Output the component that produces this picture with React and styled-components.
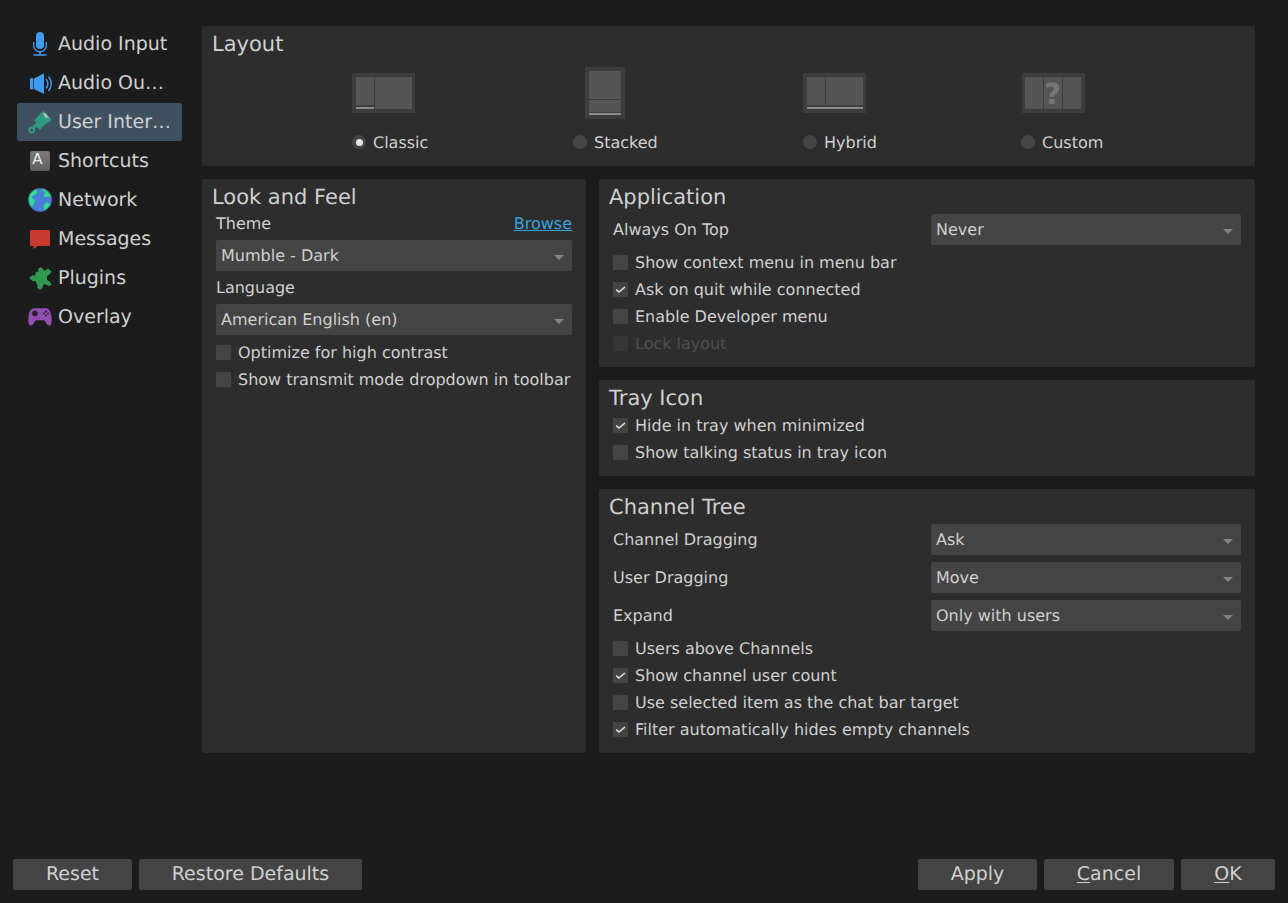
import React from "react";
import styled, { createGlobalStyle } from "styled-components";

const GlobalStyle = createGlobalStyle`
  html, body {
    margin: 0;
    padding: 0;
    background: #1c1c1c;
  }
  body {
    font-family: "DejaVu Sans", "Liberation Sans", sans-serif;
    color: #d0d0d0;
    text-rendering: geometricPrecision;
  }
`;

const Page = styled.div`
  width: 1288px;
  height: 903px;
  display: flex;
  flex-direction: column;
  overflow: hidden;
`;

const Body = styled.div`
  display: flex;
  padding-left: 17px;
  gap: 20px;
`;

const Sidebar = styled.nav`
  width: 165px;
  padding-top: 25px;
  display: flex;
  flex-direction: column;
  gap: 1px;
`;

const NavItem = styled.div`
  height: 38px;
  display: flex;
  align-items: center;
  gap: 6px;
  padding-left: 11px;
  border-radius: 2px;
  font-size: 19px;
  white-space: nowrap;
  background: ${(p) => (p.$active ? "#3f5060" : "transparent")};
`;

const NavIcon = styled.svg`
  width: 24px;
  height: 24px;
  flex: none;
`;

const Main = styled.main`
  width: 1053px;
  padding-top: 26px;
  display: flex;
  flex-direction: column;
  gap: 13px;
`;

const Panel = styled.section`
  background: #2d2d2d;
  border-radius: 2px;
  padding: 0 14px 10px;
`;

const Title = styled.h2`
  margin: 0 0 0 -4px;
  padding-top: 6px;
  height: 24px;
  line-height: 24px;
  font-size: 21px;
  font-weight: 400;
  box-sizing: content-box;
`;

const LayoutPanel = styled(Panel)`
  padding-bottom: 13px;
`;

const LayoutGrid = styled.div`
  margin: 11px 0 0 135px;
  display: grid;
  grid-template-columns: 221px 230px 218px auto;
`;

const LayoutOption = styled.div`
  display: flex;
  flex-direction: column;
  row-gap: 12px;
`;

const PreviewBox = styled.div`
  height: 52px;
  display: flex;
  align-items: center;
  padding-left: ${(p) => p.$indent}px;
`;

const Preview = styled.svg`
  display: block;
`;

const RadioRow = styled.label`
  height: 22px;
  display: flex;
  align-items: center;
  gap: 7px;
  font-size: 16px;
`;

const Radio = styled.span`
  width: 14px;
  height: 14px;
  margin-left: 1px;
  border-radius: 50%;
  background: #444444;
  display: flex;
  align-items: center;
  justify-content: center;
  &::after {
    content: "";
    width: 7px;
    height: 7px;
    border-radius: 50%;
    background: ${(p) => (p.$checked ? "#e6e6e6" : "transparent")};
  }
`;

const Columns = styled.div`
  display: grid;
  grid-template-columns: 384px 656px;
  column-gap: 13px;
`;

const Stack = styled.div`
  display: flex;
  flex-direction: column;
  gap: 13px;
`;

const LabelRow = styled.div`
  height: 22px;
  margin-top: ${(p) => p.$top}px;
  display: flex;
  align-items: center;
  justify-content: space-between;
  font-size: 16px;
`;

const LinkText = styled.a`
  color: #3aa3dc;
  text-decoration: underline;
`;

const ComboBox = styled.div`
  height: 31px;
  margin-top: ${(p) => p.$top || 0}px;
  padding: 0 8px 0 5px;
  background: #444444;
  border-radius: 2px;
  display: flex;
  align-items: center;
  justify-content: space-between;
  font-size: 16px;
  &::after {
    content: "";
    margin-top: 3px;
    border-left: 5px solid transparent;
    border-right: 5px solid transparent;
    border-top: 5px solid #858585;
  }
`;

const FormRow = styled.div`
  margin-top: ${(p) => p.$top}px;
  display: grid;
  grid-template-columns: 318px 310px;
  align-items: center;
  font-size: 16px;
`;

const CheckList = styled.div`
  margin-top: ${(p) => p.$top}px;
  display: flex;
  flex-direction: column;
`;

const CheckRow = styled.label`
  height: 27px;
  display: flex;
  align-items: center;
  gap: 7px;
  font-size: 16px;
  color: ${(p) => (p.$disabled ? "#4e4e4e" : "inherit")};
`;

const Box = styled.span`
  width: 15px;
  height: 15px;
  border-radius: 1px;
  background: ${(p) => (p.$disabled ? "#353535" : "#444444")};
  display: flex;
  align-items: center;
  justify-content: center;
`;

const Footer = styled.footer`
  margin-top: auto;
  padding: 0 13px 13px;
  display: flex;
  gap: 7px;
`;

const Button = styled.button`
  height: 31px;
  width: ${(p) => p.$width}px;
  margin-left: ${(p) => (p.$push ? "auto" : "0")};
  padding: 0 0 1px;
  border: 0;
  border-radius: 2px;
  background: #444444;
  color: #d0d0d0;
  font-family: inherit;
  font-size: 19px;
  text-rendering: geometricPrecision;
  u {
    text-underline-offset: 2px;
  }
`;

function MicIcon() {
  return (
    <NavIcon viewBox="0 0 24 24">
      <rect x="8" y="0" width="8" height="17" rx="4" fill="#3f9cf0" />
      <path d="M5.700 10v3.500a6.300 6.300 0 0 0 12.600 0V10M12 19.800v3M5.500 23h13" fill="none" stroke="#3f9cf0" strokeWidth="1.400" />
    </NavIcon>
  );
}

function SpeakerIcon() {
  return (
    <NavIcon viewBox="0 0 24 24">
      <rect x="2" y="7.300" width="3.300" height="11" fill="#3f9cf0" />
      <path d="M6 7.500l10-5.200v20.700L6 18z" fill="#3f9cf0" />
      <path d="M18 8a7 7 0 0 1 0 9.500M20.500 5.500a11 11 0 0 1 0 14.500" fill="none" stroke="#3f9cf0" strokeWidth="1.400" />
    </NavIcon>
  );
}

function BrushIcon() {
  return (
    <NavIcon viewBox="0 0 24 24">
      <path d="M15.300.7L23.700 10 14.500 16.500 12 20 9 17 7 17 9 12.500 6 10.500z" fill="#2f9a82" />
      <path d="M15.500 3.500l2.500 4.500 1.500-1.500-1.500-2.500zM19.500 6l1.500 2.500" fill="#b9c9c5" stroke="#b9c9c5" strokeWidth=".7" />
      <path d="M5.500 17.500L10 13.500" stroke="#2f9a82" strokeWidth="3" />
      <circle cx="3.700" cy="20" r="2.500" fill="none" stroke="#2f9a82" strokeWidth="2" />
    </NavIcon>
  );
}

function KeyIcon() {
  return (
    <NavIcon viewBox="0 0 24 24">
      <defs>
        <linearGradient id="keyFill" x1="0" y1="0" x2="0" y2="1">
          <stop offset="0" stopColor="#7a7a7a" />
          <stop offset="1" stopColor="#5e5e5e" />
        </linearGradient>
      </defs>
      <rect x="2" y="2" width="20" height="20" rx="2.500" fill="url(#keyFill)" />
      <text x="9.500" y="15" textAnchor="middle" fontSize="15" fill="#f2f2f2" fontFamily="DejaVu Sans">A</text>
    </NavIcon>
  );
}

function GlobeIcon() {
  return (
    <NavIcon viewBox="0 0 24 24">
      <circle cx="12" cy="12" r="11.800" fill="#4a7fd8" />
      <path d="M8 1C5 2 2 4.500 1 8c-1 4 0 8 3 11 1-3 3-4 3-6s-3-2-3-4 4-2 5-4c.5-1-.5-3-1-4zM14 .6c-.5 2 1 3 3 3 1 2-2 3-1 5 2 1 5-1 7.500 1C23 5 19 1 14 .6zM18 15c-2 1-3 4-2 7 3-1 5-3 6-6-1-1-3-2-4-1z" fill="#2fdf8c" />
      <circle cx="12" cy="12" r="11.500" fill="none" stroke="#3b5f9e" strokeWidth=".6" />
    </NavIcon>
  );
}

function MessageIcon() {
  return (
    <NavIcon viewBox="0 0 24 24">
      <path d="M3 3h18a1 1 0 0 1 1 1v14a1 1 0 0 1-1 1H10l-4.500 3v-3H3a1 1 0 0 1-1-1V4a1 1 0 0 1 1-1z" fill="#c8392f" />
    </NavIcon>
  );
}

function PuzzleIcon() {
  return (
    <NavIcon viewBox="0 0 24 24">
      <path d="M1 12l3.500-3 2.500 1 1-4 2.500-.5L10 3l2.500-2L15 3l1 2 4-2.500L23.500 5.500 22 8l-3 2v4l3 2 1.500 3L21 20l-4-2-2 1-.5 3L12 24l-2.500-2v-3l-2-4h-3z" fill="#2f9a4f" />
    </NavIcon>
  );
}

function PadIcon() {
  return (
    <NavIcon viewBox="0 0 24 24">
      <path d="M6 3.300h12c3 0 4.800 3 5.400 8 .5 4 .4 8-1 9-2 1-4-1-6-5H7.600c-2 4-4 6-6 5-1.400-1-1.500-5-1-9C1.200 6.300 3 3.300 6 3.300z" fill="#8f4fb0" />
      <circle cx="7" cy="8.500" r="2.800" fill="#2a1d30" />
      <g fill="#2a1d30">
        <circle cx="18" cy="6.500" r="1" />
        <circle cx="18" cy="10.500" r="1" />
        <circle cx="16" cy="8.500" r="1" />
        <circle cx="20" cy="8.500" r="1" />
      </g>
    </NavIcon>
  );
}

const navItems = [
  { label: "Audio Input", Icon: MicIcon },
  { label: "Audio Ou…", Icon: SpeakerIcon },
  { label: "User Inter…", Icon: BrushIcon, active: true },
  { label: "Shortcuts", Icon: KeyIcon },
  { label: "Network", Icon: GlobeIcon },
  { label: "Messages", Icon: MessageIcon },
  { label: "Plugins", Icon: PuzzleIcon },
  { label: "Overlay", Icon: PadIcon },
];

const FRAME = "#3d3d3d";
const PANE = "#555555";
const BAR = "#8a8a8a";

function ClassicPreview() {
  return (
    <Preview width="63" height="40">
      <rect width="63" height="40" fill={FRAME} />
      <rect x="4" y="4" width="18" height="28" fill={PANE} />
      <rect x="4" y="34" width="18" height="2" fill={BAR} />
      <rect x="23" y="4" width="37" height="32" fill={PANE} />
    </Preview>
  );
}

function StackedPreview() {
  return (
    <Preview width="40" height="52">
      <rect width="40" height="52" fill={FRAME} />
      <rect x="4" y="4" width="32" height="28" fill={PANE} />
      <rect x="4" y="33" width="32" height="12" fill={PANE} />
      <rect x="4" y="46" width="32" height="2" fill={BAR} />
    </Preview>
  );
}

function HybridPreview() {
  return (
    <Preview width="63" height="40">
      <rect width="63" height="40" fill={FRAME} />
      <rect x="4" y="4" width="18" height="28" fill={PANE} />
      <rect x="23" y="4" width="37" height="28" fill={PANE} />
      <rect x="4" y="34" width="56" height="2" fill={BAR} />
    </Preview>
  );
}

function CustomPreview() {
  return (
    <Preview width="63" height="40">
      <rect width="63" height="40" fill={FRAME} />
      <rect x="3" y="4" width="18" height="32" fill={PANE} />
      <rect x="22" y="4" width="18" height="32" fill={PANE} />
      <rect x="41" y="4" width="18" height="32" fill={PANE} />
      <text x="30.600" y="31" textAnchor="middle" fontSize="29" fontWeight="700" fill="#777777" fontFamily="DejaVu Sans">?</text>
    </Preview>
  );
}

const layouts = [
  { label: "Classic", Art: ClassicPreview, indent: 1, checked: true },
  { label: "Stacked", Art: StackedPreview, indent: 13 },
  { label: "Hybrid", Art: HybridPreview, indent: 1 },
  { label: "Custom", Art: CustomPreview, indent: 2 },
];

function Check({ label, checked, disabled }) {
  return (
    <CheckRow $disabled={disabled}>
      <Box $disabled={disabled}>
        {checked && (
          <svg width="11" height="11" viewBox="0 0 11 11">
            <path d="M1.200 5.500L3.800 8 10 3" fill="none" stroke="#e4e4e4" strokeWidth="1.500" />
          </svg>
        )}
      </Box>
      {label}
    </CheckRow>
  );
}

function Field({ label, value, top }) {
  return (
    <FormRow $top={top}>
      <span>{label}</span>
      <ComboBox>{value}</ComboBox>
    </FormRow>
  );
}

export default function App() {
  return (
    <Page>
      <GlobalStyle />
      <Body>
        <Sidebar>
          {navItems.map(({ label, Icon, active }) => (
            <NavItem key={label} $active={active}>
              <Icon />
              {label}
            </NavItem>
          ))}
        </Sidebar>
        <Main>
          <LayoutPanel>
            <Title>Layout</Title>
            <LayoutGrid>
              {layouts.map(({ label, Art, indent, checked }) => (
                <LayoutOption key={label}>
                  <PreviewBox $indent={indent}>
                    <Art />
                  </PreviewBox>
                  <RadioRow>
                    <Radio $checked={checked} />
                    {label}
                  </RadioRow>
                </LayoutOption>
              ))}
            </LayoutGrid>
          </LayoutPanel>
          <Columns>
            <Panel>
              <Title>Look and Feel</Title>
              <LabelRow $top={3}>
                <span>Theme</span>
                <LinkText>Browse</LinkText>
              </LabelRow>
              <ComboBox $top={6}>Mumble - Dark</ComboBox>
              <LabelRow $top={5}>
                <span>Language</span>
              </LabelRow>
              <ComboBox $top={6}>American English (en)</ComboBox>
              <CheckList $top={4}>
                <Check label="Optimize for high contrast" />
                <Check label="Show transmit mode dropdown in toolbar" />
              </CheckList>
            </Panel>
            <Stack>
              <Panel>
                <Title>Application</Title>
                <Field label="Always On Top" value="Never" top={5} />
                <CheckList $top={4}>
                  <Check label="Show context menu in menu bar" />
                  <Check label="Ask on quit while connected" checked />
                  <Check label="Enable Developer menu" />
                  <Check label="Lock layout" disabled />
                </CheckList>
              </Panel>
              <Panel>
                <Title>Tray Icon</Title>
                <CheckList $top={2}>
                  <Check label="Hide in tray when minimized" checked />
                  <Check label="Show talking status in tray icon" />
                </CheckList>
              </Panel>
              <Panel>
                <Title>Channel Tree</Title>
                <Field label="Channel Dragging" value="Ask" top={5} />
                <Field label="User Dragging" value="Move" top={7} />
                <Field label="Expand" value="Only with users" top={7} />
                <CheckList $top={4}>
                  <Check label="Users above Channels" />
                  <Check label="Show channel user count" checked />
                  <Check label="Use selected item as the chat bar target" />
                  <Check label="Filter automatically hides empty channels" checked />
                </CheckList>
              </Panel>
            </Stack>
          </Columns>
        </Main>
      </Body>
      <Footer>
        <Button $width={119}>Reset</Button>
        <Button $width={223}>Restore Defaults</Button>
        <Button $width={119} $push>Apply</Button>
        <Button $width={130}><u>C</u>ancel</Button>
        <Button $width={94}><u>O</u>K</Button>
      </Footer>
    </Page>
  );
}
